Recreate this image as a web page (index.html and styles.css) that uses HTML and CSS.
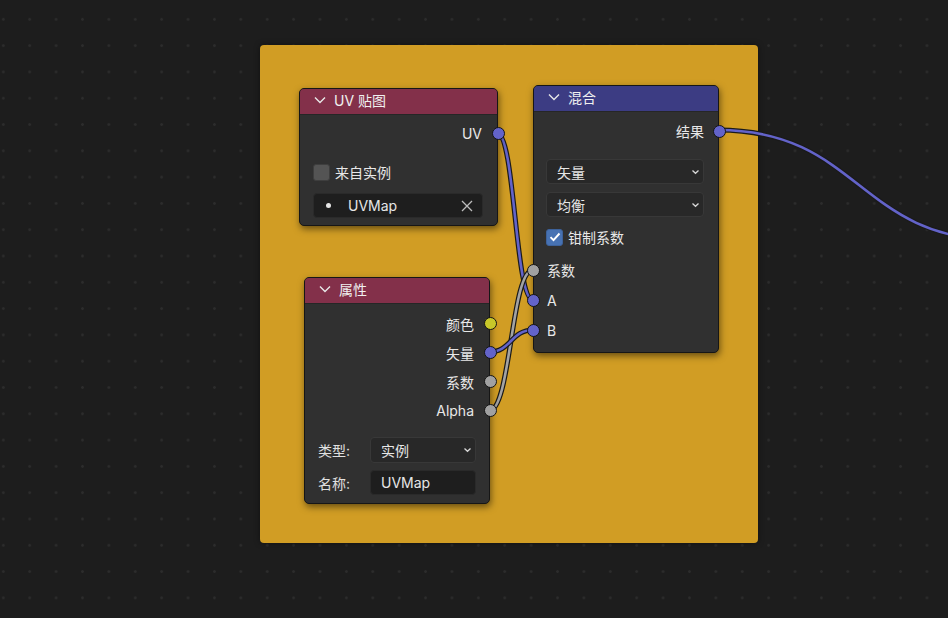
FILE: index.html
```html
<!DOCTYPE html>
<html lang="zh">
<head>
<meta charset="utf-8">
<title>Node Editor</title>
<link rel="stylesheet" href="styles.css">
</head>
<body>
<div class="canvas">
  <div class="frame"></div>

  <svg class="wires" width="948" height="618" viewBox="0 0 948 618">
    <g fill="none" stroke-linecap="round">
      <path class="w-out" d="M497,133 C515,133 515,300 533,300"/>
      <path class="w-blue" d="M497,133 C515,133 515,300 533,300"/>
      <path class="w-out" d="M489,411 C511,411 511,270 533,270"/>
      <path class="w-grey" d="M489,411 C511,411 511,270 533,270"/>
      <path class="w-out" d="M489,352 C511,352 511,330 533,330"/>
      <path class="w-blue" d="M489,352 C511,352 511,330 533,330"/>
      <path class="w-out" d="M718,130 C859,130 859,240 1000,240"/>
      <path class="w-blue" d="M718,130 C859,130 859,240 1000,240"/>
    </g>
  </svg>

  <!-- UV Map node -->
  <div class="node node-uv">
    <div class="node-header hdr-red">
      <svg class="chev" width="12" height="8" viewBox="0 0 12 8"><polyline points="1,1.5 6,6.5 11,1.5"/></svg>
      <span>UV 贴图</span>
    </div>
    <div class="node-body body-uv">
      <div class="row out">
        <span>UV</span>
        <i class="sock s-out blue"></i>
      </div>
      <div class="row check-row">
        <span class="check"></span>
        <span>来自实例</span>
      </div>
      <div class="field field-uv">
        <span class="dot"></span>
        <span class="field-text">UVMap</span>
        <svg class="xicon" width="12" height="12" viewBox="0 0 12 12"><path d="M1,1 L11,11 M11,1 L1,11"/></svg>
      </div>
    </div>
  </div>

  <!-- Mix node -->
  <div class="node node-mix">
    <div class="node-header hdr-blue">
      <svg class="chev" width="12" height="8" viewBox="0 0 12 8"><polyline points="1,1.5 6,6.5 11,1.5"/></svg>
      <span>混合</span>
    </div>
    <div class="node-body body-mix">
      <div class="row out">
        <span>结果</span>
        <i class="sock s-out blue"></i>
      </div>
      <div class="dropdown dd-first">
        <span>矢量</span>
        <svg class="ddchev" width="9" height="6" viewBox="0 0 9 6"><polyline points="1.5,1.5 4.5,4.3 7.5,1.5"/></svg>
      </div>
      <div class="dropdown">
        <span>均衡</span>
        <svg class="ddchev" width="9" height="6" viewBox="0 0 9 6"><polyline points="1.5,1.5 4.5,4.3 7.5,1.5"/></svg>
      </div>
      <div class="row check-row checked-row">
        <span class="check on">
          <svg width="12" height="10" viewBox="0 0 12 10"><polyline points="1.5,5.2 4.5,8.2 10.5,1.5"/></svg>
        </span>
        <span>钳制系数</span>
      </div>
      <div class="sock-rows">
        <div class="row in tall">
          <i class="sock s-in grey"></i>
          <span>系数</span>
        </div>
        <div class="row in tall">
          <i class="sock s-in blue"></i>
          <span>A</span>
        </div>
        <div class="row in tall">
          <i class="sock s-in blue"></i>
          <span>B</span>
        </div>
      </div>
    </div>
  </div>

  <!-- Attribute node -->
  <div class="node node-attr">
    <div class="node-header hdr-red">
      <svg class="chev" width="12" height="8" viewBox="0 0 12 8"><polyline points="1,1.5 6,6.5 11,1.5"/></svg>
      <span>属性</span>
    </div>
    <div class="node-body body-attr">
      <div class="row out mid">
        <span>颜色</span>
        <i class="sock s-out yellow"></i>
      </div>
      <div class="row out mid">
        <span>矢量</span>
        <i class="sock s-out blue"></i>
      </div>
      <div class="row out mid">
        <span>系数</span>
        <i class="sock s-out grey"></i>
      </div>
      <div class="row out mid">
        <span>Alpha</span>
        <i class="sock s-out grey"></i>
      </div>
      <div class="prop prop-first">
        <span class="prop-label">类型:</span>
        <div class="dropdown dd-attr">
          <span>实例</span>
          <svg class="ddchev" width="9" height="6" viewBox="0 0 9 6"><polyline points="1.5,1.5 4.5,4.3 7.5,1.5"/></svg>
        </div>
      </div>
      <div class="prop">
        <span class="prop-label">名称:</span>
        <div class="field field-attr">
          <span class="field-text">UVMap</span>
        </div>
      </div>
    </div>
  </div>
</div>
</body>
</html>
```

FILE: styles.css
```css
* { box-sizing: border-box; }

html, body {
  margin: 0;
  padding: 0;
  width: 948px;
  height: 618px;
  overflow: hidden;
  background: #1d1d1d;
  font-family: Inter, "Noto Sans CJK SC", "DejaVu Sans", sans-serif;
  font-size: 14px;
  color: #e8e8e8;
}

.canvas {
  position: relative;
  width: 948px;
  height: 618px;
  background-color: #1d1d1d;
  background-image: radial-gradient(circle, #2c2c2c 0, #2c2c2c 1.1px, transparent 1.6px);
  background-size: 26.4px 26.3px;
  background-position: -9.9px 6.2px;
}

.frame {
  position: absolute;
  left: 260px;
  top: 45px;
  width: 498px;
  height: 498px;
  background: #d19d24;
  border-radius: 4px;
  box-shadow: 0 0 6px rgba(0, 0, 0, 0.45);
}

.wires {
  position: absolute;
  left: 0;
  top: 0;
}
.w-out { stroke: #1a1a1a; stroke-width: 5; }
.w-blue { stroke: #6363c9; stroke-width: 2.6; }
.w-grey { stroke: #a3a3a3; stroke-width: 2.6; }

.node {
  position: absolute;
  background: #303030;
  border: 1px solid #161616;
  border-radius: 5px;
  box-shadow: 1px 3px 7px rgba(0, 0, 0, 0.5);
  display: flex;
  flex-direction: column;
}

.node-uv { left: 299px; top: 88px; width: 199px; height: 138px; }
.node-mix { left: 533px; top: 85px; width: 186px; height: 268px; }
.node-attr { left: 304px; top: 277px; width: 186px; height: 227px; }

.node-header {
  height: 26px;
  display: flex;
  align-items: center;
  gap: 8px;
  padding: 0 0 3px 14px;
  border-radius: 4px 4px 0 0;
  color: #f0f0f0;
  border-bottom: 1px solid #262626;
}
.hdr-red { background: #83304a; }
.hdr-blue { background: #3c3c83; }

.chev { flex: none; }
.chev polyline { fill: none; stroke: #e8e8e8; stroke-width: 1.4; }

.node-body {
  display: flex;
  flex-direction: column;
  position: relative;
}

.row {
  position: relative;
  display: flex;
  align-items: center;
  height: 24px;
}
.row.out { justify-content: flex-end; padding-right: 15px; }
.row.in { justify-content: flex-start; padding-left: 13px; }
.row.tall { height: 30px; }
.row.mid { height: 29px; }

.sock {
  position: absolute;
  top: 50%;
  width: 13px;
  height: 13px;
  margin-top: -6.5px;
  border-radius: 50%;
  border: 1px solid #141414;
}
.s-out { right: -7.5px; }
.s-in { left: -7.5px; }
.blue { background: #6363c9; }
.grey { background: #a1a1a1; }
.yellow { background: #c7c729; }

/* UV node */
.body-uv { padding: 6px 14px 0 13px; }
.body-uv .row.out { margin-right: -14px; }
.body-uv .check-row { margin-top: 15px; }

.check-row { gap: 5px; }
.check {
  width: 17px;
  height: 17px;
  border-radius: 3px;
  background: #545454;
  border: 1px solid #3e3e3e;
  display: flex;
  align-items: center;
  justify-content: center;
}
.check.on { background: #4772b3; border-color: #3d629b; }
.check svg polyline { fill: none; stroke: #ffffff; stroke-width: 1.9; }

.field {
  height: 25px;
  background: #1e1e1e;
  border: 1px solid #2a2a2a;
  border-radius: 4px;
  display: flex;
  align-items: center;
  color: #e6e6e6;
}
.field-uv { margin-top: 9px; padding: 0 9px 0 12px; }
.field-uv .dot {
  width: 5px;
  height: 5px;
  border-radius: 50%;
  background: #e6e6e6;
}
.field-uv .field-text { margin-left: 17px; flex: 1; }
.xicon path { fill: none; stroke: #bdbdbd; stroke-width: 1.3; }

/* Mix node */
.body-mix { padding: 7px 14px 0 12px; }
.body-mix .row.out { margin-right: -14px; padding-right: 14px; }
.body-mix .row.in { margin-left: -12px; }

.dropdown {
  height: 25px;
  background: #282828;
  border: 1px solid #383838;
  border-radius: 4px;
  display: flex;
  align-items: center;
  justify-content: space-between;
  padding: 0 3px 0 10px;
  margin-top: 8px;
  color: #e6e6e6;
}
.dd-first { margin-top: 16px; }
.ddchev polyline { fill: none; stroke: #d8d8d8; stroke-width: 1.3; }

.checked-row { margin-top: 7px; height: 26px; }
.sock-rows { margin-top: 5px; display: flex; flex-direction: column; }

/* Attribute node */
.body-attr { padding: 5px 13px 0 13px; }
.body-attr .row.out { margin-right: -13px; padding-right: 15px; }

.prop {
  display: flex;
  align-items: center;
  margin-top: 7px;
}
.prop-first { margin-top: 12px; }
.prop-label { width: 52px; flex: none; color: #e0e0e0; }
.prop .dropdown, .prop .field { flex: 1; margin-top: 0; }
.dd-attr { height: 26px; }
.field-attr { padding-left: 10px; }
```
